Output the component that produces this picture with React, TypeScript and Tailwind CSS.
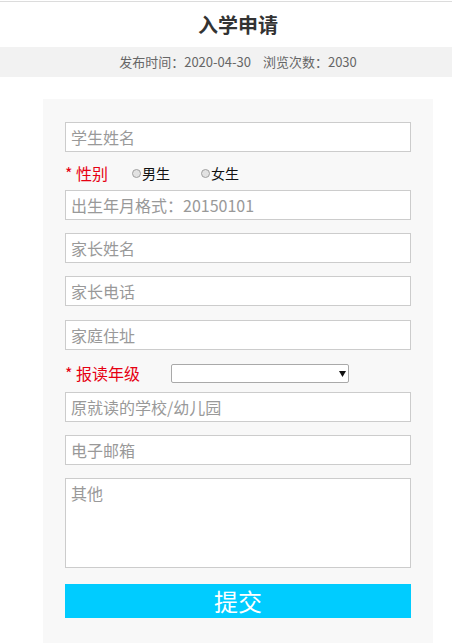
import { useState } from 'react'

const font = "font-['Noto_Sans_CJK_SC','Noto_Sans',sans-serif]"

const inputCls =
  'block w-full h-[30px] border border-[#ccc] bg-white px-[5px] text-[16px] text-[#333] placeholder:text-[#999] outline-none'

function Radio({ label, name, checked, onChange }: { label: string; name: string; checked: boolean; onChange: () => void }) {
  return (
    <label className="flex items-center text-[14px] text-[#111] cursor-pointer">
      <input
        type="radio"
        name={name}
        checked={checked}
        onChange={onChange}
        className="appearance-none w-[9px] h-[9px] rounded-full border border-[#a0a0a0] bg-[#e2e2e2] checked:bg-[#555] mr-[1px]"
      />
      {label}
    </label>
  )
}

export default function App() {
  const [gender, setGender] = useState('')

  return (
    <div className={`${font} w-[452px] min-h-[643px] bg-white`}>
      <div className="mt-px border-t border-[#dcdcdc]" />
      <h1 className="h-[45px] flex items-center justify-center pl-[24px] text-[20px] font-bold text-[#333]">入学申请</h1>
      <div className="h-[30px] flex items-center justify-center gap-[12px] pl-[24px] text-[13px] text-[#666] bg-[#f2f2f2]">
        <span>发布时间：2020-04-30</span>
        <span>浏览次数：2030</span>
      </div>

      <form className="mt-[22px] ml-[43px] w-[390px] bg-[#f8f8f8] px-[22px] pt-[23px] pb-[30px]">
        <input className={inputCls} placeholder="学生姓名" />

        <div className="h-[38px] flex items-center pt-[4px]">
          <span className="text-[16px] text-[#e60012] w-[67px]">* 性别</span>
          <div className="flex gap-[31px]">
            <Radio label="男生" name="sex" checked={gender === 'm'} onChange={() => setGender('m')} />
            <Radio label="女生" name="sex" checked={gender === 'f'} onChange={() => setGender('f')} />
          </div>
        </div>

        <input className={inputCls} placeholder="出生年月格式：20150101" />
        <input className={`${inputCls} mt-[13px]`} placeholder="家长姓名" />
        <input className={`${inputCls} mt-[13px]`} placeholder="家长电话" />
        <input className={`${inputCls} mt-[14px]`} placeholder="家庭住址" />

        <div className="h-[42px] flex items-start pt-[14px]">
          <span className="w-[106px] text-[16px] leading-[19px] text-[#e60012]">* 报读年级</span>
          <div className="relative w-[178px] h-[19px]">
            <select className="appearance-none block w-full h-full border border-[#a9a9a9] bg-white rounded-[2px] text-[13px] outline-none">
              <option value=""></option>
              <option>小班</option>
              <option>中班</option>
              <option>大班</option>
              <option>一年级</option>
            </select>
            <svg className="absolute right-[3px] top-[7px] pointer-events-none" width="7" height="6" viewBox="0 0 7 6">
              <path d="M0 0h7L3.5 6z" fill="#111" />
            </svg>
          </div>
        </div>

        <input className={inputCls} placeholder="原就读的学校/幼儿园" />
        <input className={`${inputCls} mt-[13px]`} placeholder="电子邮箱" />
        <textarea
          className="block w-full h-[90px] mt-[13px] border border-[#ccc] bg-white px-[5px] py-[2px] text-[16px] text-[#333] placeholder:text-[#999] outline-none resize-none"
          placeholder="其他"
        />

        <button
          type="button"
          className="block w-full h-[34px] mt-[16px] bg-[#00ccff] text-white text-[24px] leading-[34px]"
        >
          提交
        </button>
      </form>
    </div>
  )
}
